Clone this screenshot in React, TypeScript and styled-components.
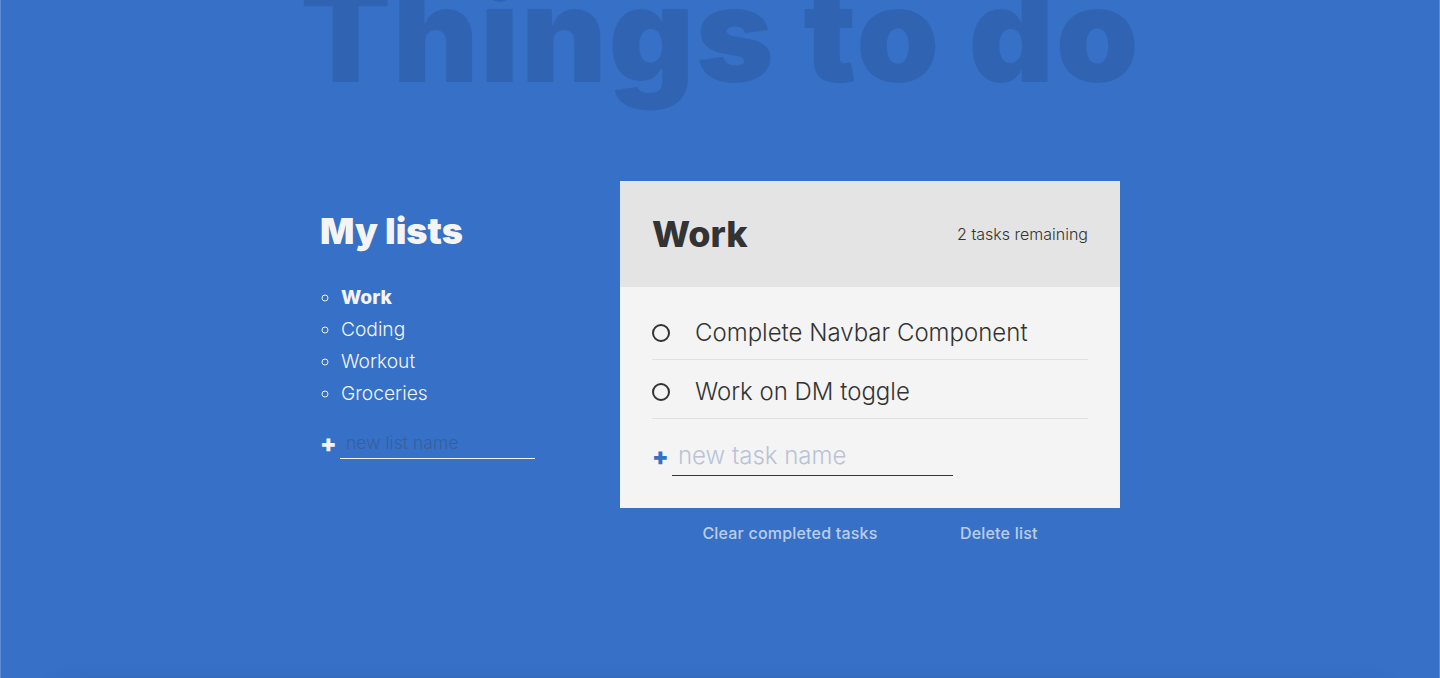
import React from "react";
import styled, { createGlobalStyle } from "styled-components";

const GlobalStyle = createGlobalStyle`
  *, *::before, *::after { box-sizing: border-box; }
  html, body { margin: 0; padding: 0; }
  body {
    background: rgb(54, 112, 199);
    font-family: Inter, "Open Sans", sans-serif;
    font-weight: 300;
    font-size: 24px;
    color: #f4f4f4;
    overflow: hidden;
  }
`;

const Page = styled.div`
  position: relative;
  min-height: 678px;
  overflow: hidden;
  display: grid;
  grid-template-columns: 1fr 300px 500px 1fr;
  grid-template-rows: auto auto;
  align-content: start;
  align-items: start;
  grid-template-areas:
    "header header header header"
    ". lists active .";
  box-shadow: inset 1px 0 0 rgba(255, 255, 255, 0.2), inset -1px 0 0 rgba(255, 255, 255, 0.2);
  &::after {
    content: "";
    position: absolute;
    left: 40px;
    right: 40px;
    top: 686px;
    height: 120px;
    border-radius: 40px;
    box-shadow: 0 0 24px 2px rgba(0, 0, 0, 0.1);
  }
`;

const Title = styled.h1`
  grid-area: header;
  text-align: center;
  font-family: Inter, sans-serif;
  font-size: 132.8px;
  font-weight: 900;
  line-height: 160px;
  color: rgba(0, 0, 0, 0.1);
  letter-spacing: 1.4px;
  margin: -46px 0 67px;
`;

const AllTasks = styled.div`
  grid-area: lists;
`;

const ListsTitle = styled.h2`
  font-size: 36px;
  font-weight: 900;
  line-height: 44px;
  margin: 28px 0 28px;
  color: #f4f4f4;
`;

const TaskList = styled.ul`
  font-size: 19.2px;
  line-height: 32px;
  list-style: circle;
  padding-left: 21px;
  margin: 0 0 19px;
`;

const ListName = styled.li<{ $active?: boolean }>`
  font-weight: ${(p) => (p.$active ? 800 : 300)};
  cursor: pointer;
`;

const Form = styled.form`
  display: flex;
  align-items: center;
`;

const CreateBtn = styled.button<{ $accent?: boolean }>`
  background: none;
  border: 0;
  padding: 0;
  width: 14px;
  margin-right: 6px;
  font-family: Inter, sans-serif;
  font-size: 24px;
  font-weight: 900;
  line-height: 1;
  color: ${(p) => (p.$accent ? "rgb(54, 112, 199)" : "#f4f4f4")};
  cursor: pointer;
  text-align: center;
`;

const NewInput = styled.input<{ $w: number; $size: number; $ph: string }>`
  background: transparent;
  border: 0;
  border-bottom: 1px solid currentColor;
  color: inherit;
  font-family: Inter, sans-serif;
  font-weight: 300;
  font-size: ${(p) => p.$size}px;
  width: ${(p) => p.$w}px;
  padding: 4px 6px 5px;
  outline: none;
  &::placeholder {
    color: ${(p) => p.$ph};
  }
`;

const TodoList = styled.div`
  grid-area: active;
  position: relative;
  background: #f4f4f4;
  color: #333;
`;

const TodoHeader = styled.div`
  padding: 32px;
  background: #e4e4e4;
  display: flex;
  align-items: center;
  justify-content: space-between;
`;

const ListTitle = styled.h2`
  margin: 0 1em 0 0;
  font-size: 36px;
  font-weight: 800;
  line-height: 42px;
`;

const TaskCount = styled.p`
  margin: 0;
  font-size: 16px;
  font-weight: 300;
`;

const TodoBody = styled.div`
  padding: 32px;
`;

const Task = styled.div`
  position: relative;
  margin-bottom: 30px;
  line-height: 28px;
  &::after {
    content: "";
    position: absolute;
    left: 0;
    right: 0;
    bottom: -12px;
    height: 1px;
    background: currentColor;
    opacity: 0.1;
  }
`;

const TaskLabel = styled.label`
  display: inline-flex;
  align-items: center;
  font-weight: 300;
`;

const Checkbox = styled.span`
  display: inline-block;
  width: 18px;
  height: 18px;
  margin-right: 25px;
  border: 2px solid currentColor;
  border-radius: 50%;
`;

const DeleteStuff = styled.div`
  position: absolute;
  left: 0;
  width: 100%;
  bottom: -35px;
  display: flex;
  justify-content: space-evenly;
`;

const DeleteBtn = styled.button`
  background: none;
  border: 0;
  padding: 0;
  color: #f4f4f4;
  opacity: 0.7;
  font-family: Inter, sans-serif;
  font-weight: 500;
  font-size: 16px;
  letter-spacing: 0.2px;
  cursor: pointer;
`;

const lists = [
  { name: "Work", active: true },
  { name: "Coding" },
  { name: "Workout" },
  { name: "Groceries" },
];

const tasks = ["Complete Navbar Component", "Work on DM toggle"];

export default function App() {
  return (
    <>
      <GlobalStyle />
      <Page>
        <Title>Things to do</Title>
        <AllTasks>
          <ListsTitle>My lists</ListsTitle>
          <TaskList>
            {lists.map((l) => (
              <ListName key={l.name} $active={l.active}>
                {l.name}
              </ListName>
            ))}
          </TaskList>
          <Form onSubmit={(e) => e.preventDefault()}>
            <CreateBtn type="button">+</CreateBtn>
            <NewInput $w={195} $size={17.6} $ph="rgba(60, 80, 110, 0.55)" placeholder="new list name" />
          </Form>
        </AllTasks>
        <TodoList>
          <TodoHeader>
            <ListTitle>Work</ListTitle>
            <TaskCount>2 tasks remaining</TaskCount>
          </TodoHeader>
          <TodoBody>
            {tasks.map((t) => (
              <Task key={t}>
                <TaskLabel>
                  <Checkbox />
                  {t}
                </TaskLabel>
              </Task>
            ))}
            <Form onSubmit={(e) => e.preventDefault()}>
              <CreateBtn type="button" $accent>+</CreateBtn>
              <NewInput $w={281} $size={24} $ph="#b9c3d5" placeholder="new task name" />
            </Form>
          </TodoBody>
          <DeleteStuff>
            <DeleteBtn>Clear completed tasks</DeleteBtn>
            <DeleteBtn>Delete list</DeleteBtn>
          </DeleteStuff>
        </TodoList>
      </Page>
    </>
  );
}
